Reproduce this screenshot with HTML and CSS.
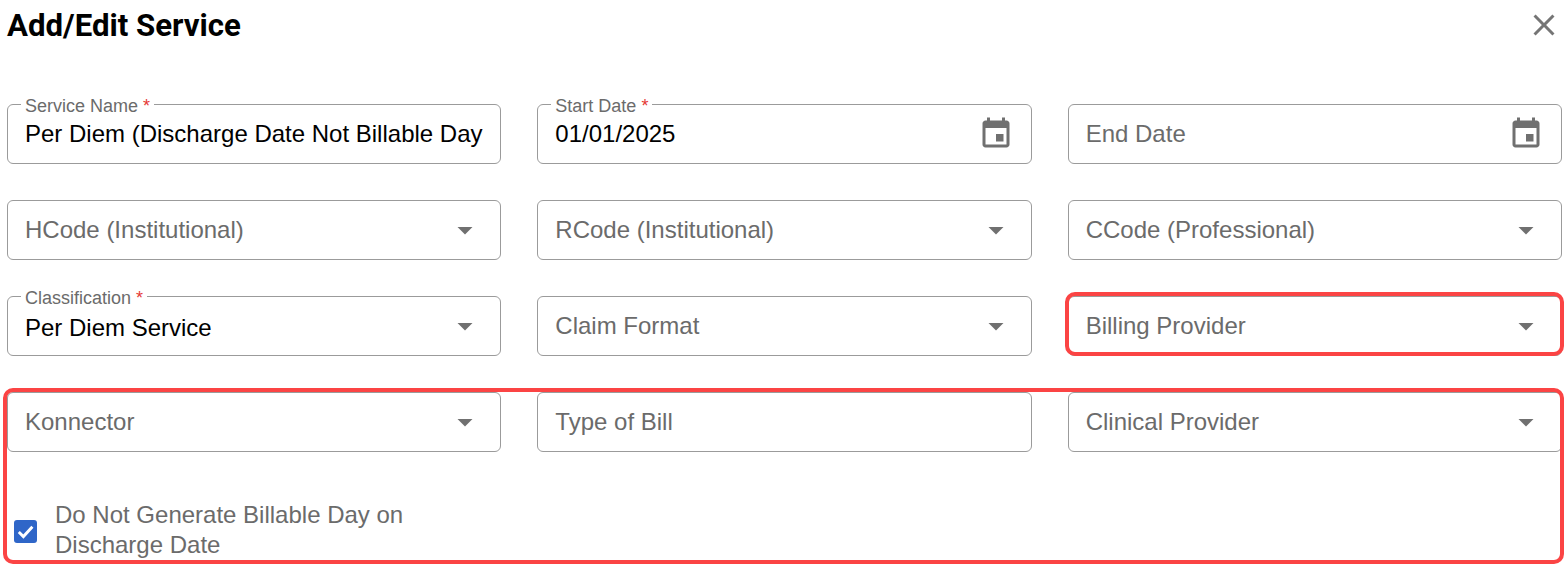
FILE: index.html
```html
<!DOCTYPE html>
<html lang="en">
<head>
    <meta charset="UTF-8">
    <meta name="viewport" content="width=device-width, initial-scale=1.0">
    <title>Add/Edit Service</title>
    <link rel="stylesheet" href="styles.css">
</head>
<body>
    <div class="dialog">
        <div class="dialog-header">
            <h1>Add/Edit Service</h1>
            <svg class="close-icon" viewBox="0 0 24 24"><path d="M19 6.41 17.59 5 12 10.59 6.41 5 5 6.41 10.59 12 5 17.59 6.41 19 12 13.41 17.59 19 19 17.59 13.41 12z"/></svg>
        </div>
        <div class="form-grid">
            <div class="field">
                <span class="float-label">Service Name <i>*</i></span>
                <span class="value">Per Diem (Discharge Date Not Billable Day</span>
            </div>
            <div class="field">
                <span class="float-label">Start Date <i>*</i></span>
                <span class="value">01/01/2025</span>
                <svg class="field-icon" viewBox="0 0 24 24"><path d="M17 12h-5v5h5v-5zM16 1v2H8V1H6v2H5c-1.11 0-1.99.9-1.99 2L3 19c0 1.1.89 2 2 2h14c1.1 0 2-.9 2-2V5c0-1.1-.9-2-2-2h-1V1h-2zm3 18H5V8h14v11z"/></svg>
            </div>
            <div class="field">
                <span class="placeholder">End Date</span>
                <svg class="field-icon" viewBox="0 0 24 24"><path d="M17 12h-5v5h5v-5zM16 1v2H8V1H6v2H5c-1.11 0-1.99.9-1.99 2L3 19c0 1.1.89 2 2 2h14c1.1 0 2-.9 2-2V5c0-1.1-.9-2-2-2h-1V1h-2zm3 18H5V8h14v11z"/></svg>
            </div>

            <div class="field">
                <span class="placeholder">HCode (Institutional)</span>
                <svg class="field-icon" viewBox="0 0 24 24"><path d="M7 10l5 5 5-5z"/></svg>
            </div>
            <div class="field">
                <span class="placeholder">RCode (Institutional)</span>
                <svg class="field-icon" viewBox="0 0 24 24"><path d="M7 10l5 5 5-5z"/></svg>
            </div>
            <div class="field">
                <span class="placeholder">CCode (Professional)</span>
                <svg class="field-icon" viewBox="0 0 24 24"><path d="M7 10l5 5 5-5z"/></svg>
            </div>

            <div class="field">
                <span class="float-label">Classification <i>*</i></span>
                <span class="value value-select">Per Diem Service</span>
                <svg class="field-icon" viewBox="0 0 24 24"><path d="M7 10l5 5 5-5z"/></svg>
            </div>
            <div class="field">
                <span class="placeholder">Claim Format</span>
                <svg class="field-icon" viewBox="0 0 24 24"><path d="M7 10l5 5 5-5z"/></svg>
            </div>
            <div class="field">
                <span class="placeholder">Billing Provider</span>
                <svg class="field-icon" viewBox="0 0 24 24"><path d="M7 10l5 5 5-5z"/></svg>
            </div>

            <div class="field">
                <span class="placeholder">Konnector</span>
                <svg class="field-icon" viewBox="0 0 24 24"><path d="M7 10l5 5 5-5z"/></svg>
            </div>
            <div class="field">
                <span class="placeholder">Type of Bill</span>
            </div>
            <div class="field">
                <span class="placeholder">Clinical Provider</span>
                <svg class="field-icon" viewBox="0 0 24 24"><path d="M7 10l5 5 5-5z"/></svg>
            </div>
        </div>
        <label class="check-row">
            <span class="check-box">
                <svg viewBox="0 0 24 24"><path d="M5 12.5l4.8 4.8L19.2 7" /></svg>
            </span>
            <span class="check-text">Do Not Generate Billable Day on Discharge Date</span>
        </label>
    </div>

    <!-- review marks drawn over the form -->
    <div class="mark mark-billing"></div>
    <div class="mark mark-group"></div>
</body>
</html>
```

FILE: styles.css
```css
html, body {
    margin: 0;
    height: 572px;
    overflow: hidden;
    background: #fff;
}
body {
    position: relative;
    font-family: "Liberation Sans", Arial, sans-serif;
}
.dialog {
    padding: 0 4px 0 7px;
}
.dialog-header {
    display: flex;
    justify-content: space-between;
    align-items: center;
    height: 50px;
    margin-bottom: 54px;
}
.dialog-header h1 {
    margin: 0;
    font-family: Roboto, sans-serif;
    font-size: 31.2px;
    font-weight: 700;
    color: #000;
}
.close-icon {
    width: 36px;
    height: 36px;
    fill: #757575;
}
.form-grid {
    display: grid;
    grid-template-columns: repeat(3, 1fr);
    gap: 36px;
}
.field {
    position: relative;
    display: flex;
    align-items: center;
    justify-content: space-between;
    box-sizing: border-box;
    height: 60px;
    padding: 0 17px;
    border: 1px solid #9b9b9b;
    border-radius: 6px;
    font-size: 24px;
}
.float-label {
    position: absolute;
    top: -9px;
    left: 13px;
    padding: 0 4px;
    background: #fff;
    font-size: 18px;
    line-height: 20px;
    color: #6b6b6b;
}
.float-label i {
    font-style: normal;
    color: #e53935;
}
.value {
    color: #000;
    white-space: nowrap;
}
.value-select {
    padding-top: 4px;
}
.placeholder {
    color: #6b6b6b;
}
.field-icon {
    width: 36px;
    height: 36px;
    flex: none;
    fill: #707070;
}
.check-row {
    display: flex;
    align-items: center;
    gap: 18px;
    width: 400px;
    margin-top: 48px;
    padding-left: 7px;
}
.check-box {
    flex: none;
    width: 23px;
    height: 23px;
    margin-top: 2px;
    border-radius: 3px;
    background: #2f66c8;
}
.check-box svg {
    display: block;
    fill: none;
    stroke: #fff;
    stroke-width: 3;
}
.check-text {
    font-size: 24px;
    line-height: 30px;
    color: #6b6b6b;
}
.mark {
    position: absolute;
    box-sizing: border-box;
    border: 4px solid #fb4444;
    border-radius: 10px;
}
.mark-billing {
    left: 1065px;
    top: 292px;
    width: 499px;
    height: 64px;
}
.mark-group {
    left: 3px;
    top: 388px;
    width: 1561px;
    height: 176px;
}
```
